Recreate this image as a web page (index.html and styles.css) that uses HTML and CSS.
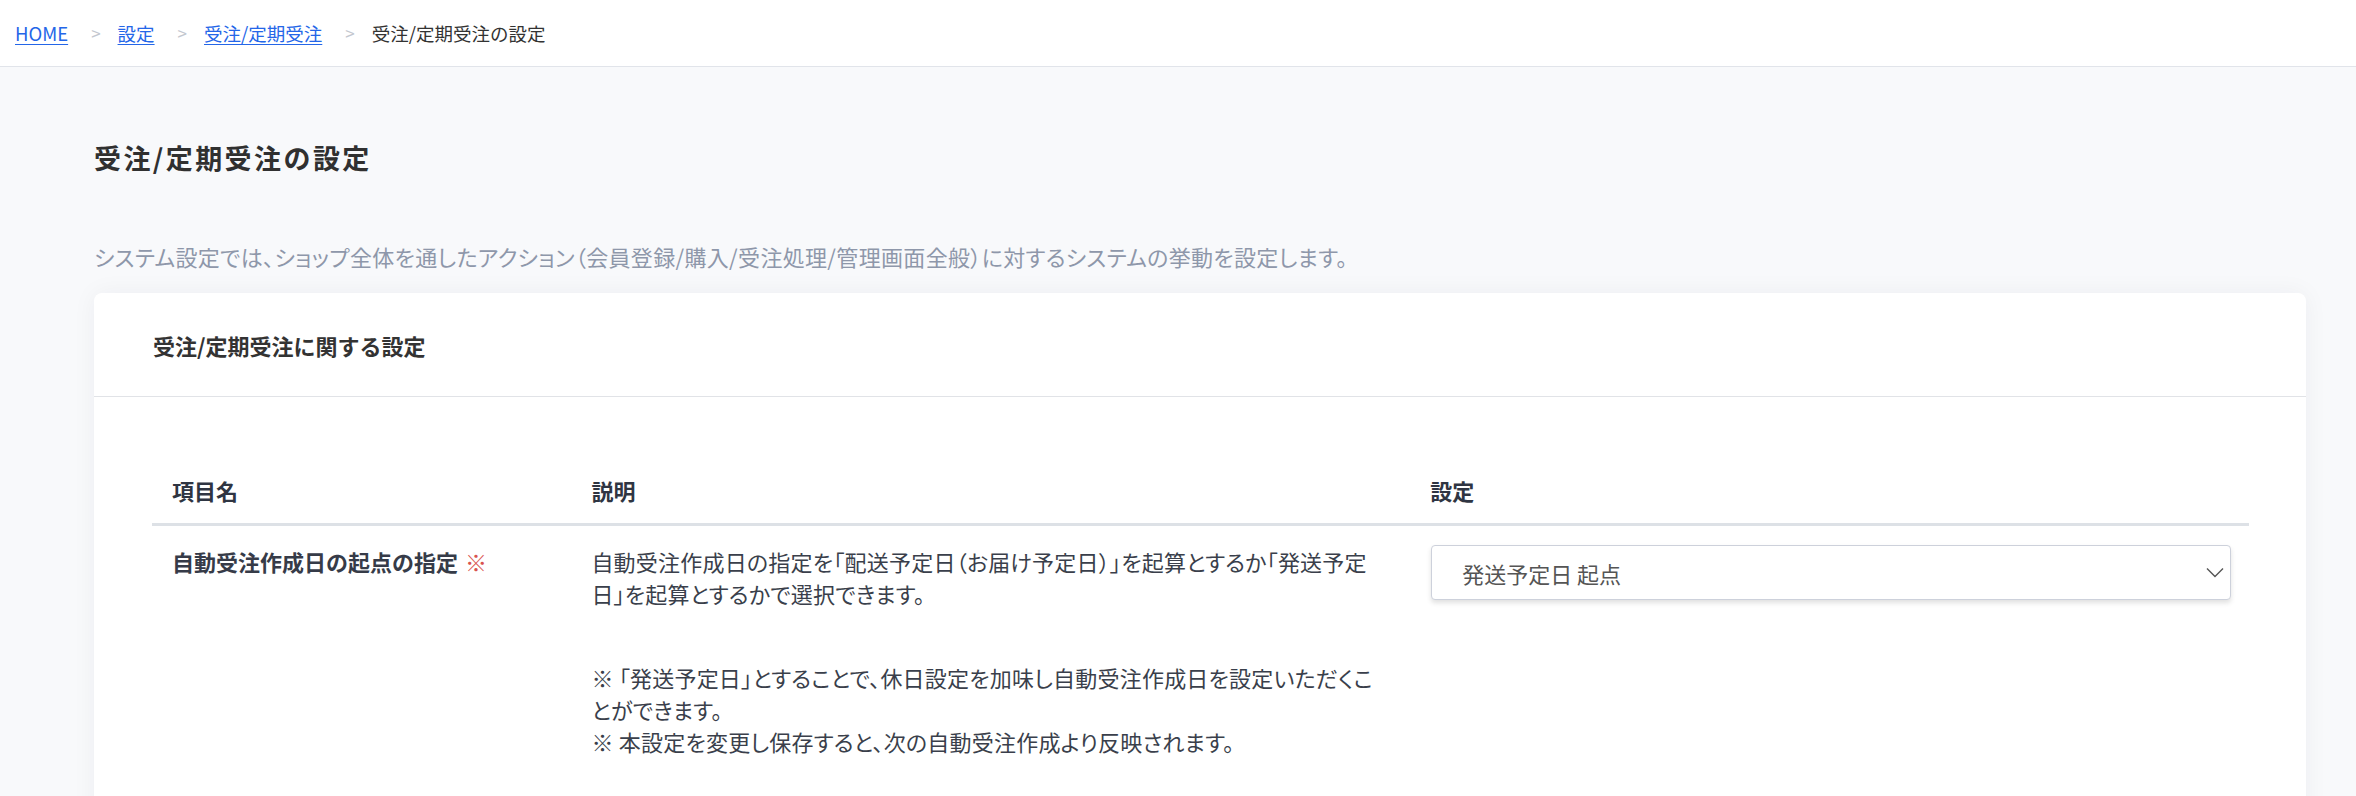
FILE: index.html
```html
<!DOCTYPE html>
<html lang="ja">
<head>
<meta charset="utf-8">
<title>受注/定期受注の設定</title>
<link rel="stylesheet" href="styles.css">
</head>
<body>
<header class="topbar">
  <nav class="crumbs">
    <a class="crumb-link" href="#">HOME</a>
    <span class="crumb-sep">&gt;</span>
    <a class="crumb-link" href="#">設定</a>
    <span class="crumb-sep">&gt;</span>
    <a class="crumb-link" href="#">受注/定期受注</a>
    <span class="crumb-sep">&gt;</span>
    <span class="crumb-current">受注/定期受注の設定</span>
  </nav>
</header>
<main class="main">
  <h1 class="page-title">受注/定期受注の設定</h1>
  <p class="page-desc">システム設定では、ショップ全体を通したアクション（会員登録/購入/受注処理/管理画面全般）に対するシステムの挙動を設定します。</p>
  <section class="card">
    <div class="card-head">受注/定期受注に関する設定</div>
    <div class="card-body">
      <table class="settings">
        <colgroup>
          <col class="col-name">
          <col class="col-desc">
          <col class="col-value">
        </colgroup>
        <thead>
          <tr>
            <th>項目名</th>
            <th>説明</th>
            <th>設定</th>
          </tr>
        </thead>
        <tbody>
          <tr>
            <td class="item-name">自動受注作成日の起点の指定 <span class="req">※</span></td>
            <td class="item-desc">
              <p class="desc-p">自動受注作成日の指定を「配送予定日（お届け予定日）」を起算とするか「発送予定日」を起算とするかで選択できます。</p>
              <p class="desc-p desc-note">※ 「発送予定日」とすることで、休日設定を加味し自動受注作成日を設定いただくことができます。<br>※ 本設定を変更し保存すると、次の自動受注作成より反映されます。</p>
            </td>
            <td class="item-value">
              <div class="select">
                <span class="select-text">発送予定日 起点</span>
                <svg class="select-caret" width="18" height="11" viewBox="0 0 18 11"><polyline points="1,1.5 9,9.5 17,1.5" fill="none" stroke="#555" stroke-width="1.4"/></svg>
              </div>
            </td>
          </tr>
        </tbody>
      </table>
    </div>
  </section>
</main>
</body>
</html>
```
FILE: styles.css
```css
* { box-sizing: border-box; }
html, body { margin: 0; padding: 0; }
body {
  background: #f8f9fb;
  font-family: "Noto Sans CJK JP", "Noto Sans", sans-serif;
  color: #333a46;
  overflow: hidden;
}
.topbar {
  height: 67px;
  background: #fff;
  border-bottom: 1px solid #e1e4ea;
  display: flex;
  align-items: center;
  padding-left: 15px;
}
.crumbs {
  display: flex;
  align-items: center;
  font-size: 18.5px;
  line-height: 28px;
}
.crumb-link { color: #2466e8; text-decoration: underline; text-underline-offset: 3px; }
.crumb-sep { color: #c3c7cf; margin: 0 17px 0 23px; font-size: 17px; }
.crumb-current { color: #333; }
.main { padding: 0 50px 0 94px; }
.page-title {
  margin: 71px 0 0;
  font-size: 27px;
  line-height: 40px;
  font-weight: 700;
  letter-spacing: 0.09em;
  color: #303030;
}
.page-desc {
  margin: 62px 0 0;
  font-size: 22px;
  line-height: 32px;
  color: #8e97aa;
  font-feature-settings: "palt";
  letter-spacing: 0.015em;
}
.card {
  margin-top: 21px;
  background: #fff;
  border-radius: 8px;
  box-shadow: 0 0 24px rgba(20, 30, 60, 0.05);
  min-height: 600px;
}
.card-head {
  height: 104px;
  display: flex;
  align-items: center;
  padding-left: 59px;
  border-bottom: 1px solid #e1e3e7;
  font-size: 22px;
  font-weight: 700;
  color: #333;
}
.card-body { padding: 58px 57px 40px 58px; }
.settings {
  width: 100%;
  border-collapse: collapse;
  table-layout: fixed;
}
.col-name { width: 20%; }
.col-desc { width: 40%; }
.col-value { width: 40%; }
.settings th {
  text-align: left;
  font-size: 22px;
  line-height: 32px;
  font-weight: 700;
  color: #2f3542;
  padding: 19px 20px 17px;
  border-bottom: 3px solid #dde1e6;
}
.settings td {
  vertical-align: top;
  padding: 19px 20px;
  font-size: 22px;
  line-height: 32px;
}
.item-name { font-weight: 700; color: #363b48; }
.req { color: #d9534f; font-weight: 400; margin-left: 2px; }
.item-desc { color: #3a3f4b; font-feature-settings: "palt"; letter-spacing: 0.01em; }
.desc-p { margin: 0; }
.desc-note { margin-top: 52px; }
.settings td.item-value { padding: 19px 18px 19px 21px; }
.select {
  height: 55px;
  border: 1px solid #cdd1db;
  border-radius: 4px;
  background: #fff;
  box-shadow: 0 3px 5px rgba(0, 0, 0, 0.12);
  display: flex;
  align-items: center;
  justify-content: space-between;
  padding: 0 6px 0 30px;
}
.select-text { font-size: 22px; color: #555; }
.select-caret { display: block; }
```
